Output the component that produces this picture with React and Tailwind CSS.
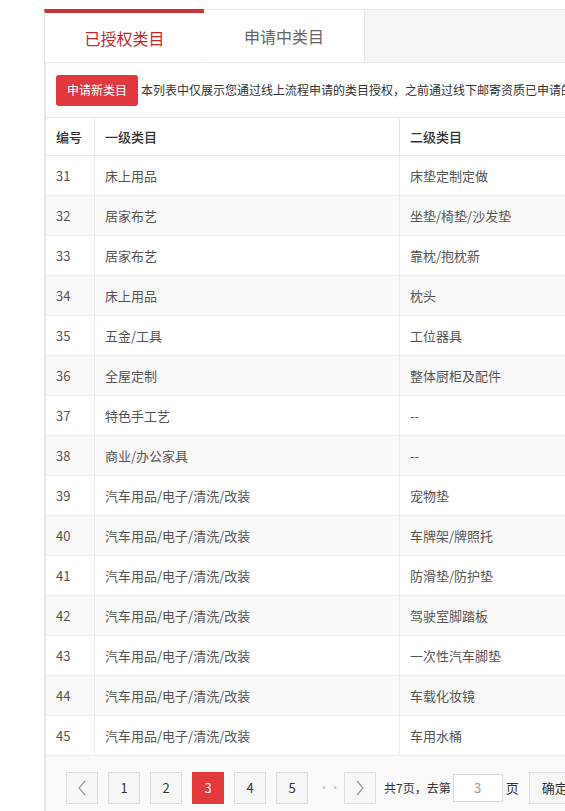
import React from "react";

const rows = [
  ["31", "床上用品", "床垫定制定做"],
  ["32", "居家布艺", "坐垫/椅垫/沙发垫"],
  ["33", "居家布艺", "靠枕/抱枕新"],
  ["34", "床上用品", "枕头"],
  ["35", "五金/工具", "工位器具"],
  ["36", "全屋定制", "整体厨柜及配件"],
  ["37", "特色手工艺", "--"],
  ["38", "商业/办公家具", "--"],
  ["39", "汽车用品/电子/清洗/改装", "宠物垫"],
  ["40", "汽车用品/电子/清洗/改装", "车牌架/牌照托"],
  ["41", "汽车用品/电子/清洗/改装", "防滑垫/防护垫"],
  ["42", "汽车用品/电子/清洗/改装", "驾驶室脚踏板"],
  ["43", "汽车用品/电子/清洗/改装", "一次性汽车脚垫"],
  ["44", "汽车用品/电子/清洗/改装", "车载化妆镜"],
  ["45", "汽车用品/电子/清洗/改装", "车用水桶"],
];

function Chevron({ dir }) {
  return (
    <svg width="10" height="16" viewBox="0 0 10 16" fill="none">
      {dir === "left" ? (
        <polyline points="8,1 2,8 8,15" stroke="#9a9a9a" strokeWidth="1.2" />
      ) : (
        <polyline points="2,1 8,8 2,15" stroke="#9a9a9a" strokeWidth="1.2" />
      )}
    </svg>
  );
}

function PageBtn({ children, active }) {
  return (
    <div
      className={
        active
          ? "w-[32px] h-[32px] flex items-center justify-center bg-[#e4393c] text-white text-[13px]"
          : "w-[32px] h-[32px] flex items-center justify-center bg-[#f7f7f7] border border-[#dcdcdc] text-[#333] text-[13px]"
      }
    >
      {children}
    </div>
  );
}

export default function App() {
  return (
    <div className="w-[565px] h-[811px] overflow-hidden bg-white font-['Noto_Sans_CJK_SC','Microsoft_YaHei',sans-serif]">
      <div className="ml-[44px] mt-[9px] w-[900px]">
        {/* Tabs */}
        <div className="flex h-[54px]">
          <div className="w-[160px] border-t-4 border-t-[#c9353a] border-l border-l-[#e6e6e6] border-b border-b-[#ececec] bg-white flex items-center justify-center text-[16px] text-[#c1272d]">
            已授权类目
          </div>
          <div className="w-[161px] border-t border-r border-b border-[#e6e6e6] bg-white flex items-center justify-center text-[16px] text-[#666]">
            申请中类目
          </div>
          <div className="flex-1 bg-[#f5f5f5] border-t border-b border-[#e6e6e6]"></div>
        </div>

        {/* Panel */}
        <div className="border-l-2 border-[#e6e6e6]">
          <div className="h-[54px] flex items-center pl-[10px]">
            <div className="w-[82px] h-[31px] rounded-[3px] bg-[#e0383e] text-white text-[12px] flex items-center justify-center shrink-0">
              申请新类目
            </div>
            <div className="ml-[3px] text-[12px] text-[#333] whitespace-nowrap">
              本列表中仅展示您通过线上流程申请的类目授权，之前通过线下邮寄资质已申请的类目授权请在其他页面查看
            </div>
          </div>

          {/* Table */}
          <div className="border-t border-[#e8e8e8]">
            <div className="flex h-[38px] text-[13px] text-[#333] font-medium border-b border-[#e8e8e8] bg-white">
              <div className="w-[49px] pl-[10px] flex items-center border-r border-[#e8e8e8]">编号</div>
              <div className="w-[305px] pl-[10px] flex items-center border-r border-[#e8e8e8]">一级类目</div>
              <div className="flex-1 pl-[10px] flex items-center">二级类目</div>
            </div>
            {rows.map((r, i) => (
              <div
                key={r[0]}
                className={
                  "flex h-[40px] text-[13px] text-[#555] border-b border-[#ececec] " +
                  (i % 2 === 1 ? "bg-[#f9f9f9]" : "bg-white")
                }
              >
                <div className="w-[49px] pl-[10px] flex items-center border-r border-[#ececec]">{r[0]}</div>
                <div className="w-[305px] pl-[10px] flex items-center border-r border-[#ececec]">{r[1]}</div>
                <div className="flex-1 pl-[10px] flex items-center">{r[2]}</div>
              </div>
            ))}
          </div>

          {/* Pagination */}
          <div className="bg-[#fafafa] h-[80px] pt-[16px] pl-[20px] flex items-start">
            <div className="flex items-center">
              <PageBtn>
                <Chevron dir="left" />
              </PageBtn>
              <div className="ml-[10px]"><PageBtn>1</PageBtn></div>
              <div className="ml-[10px]"><PageBtn>2</PageBtn></div>
              <div className="ml-[10px]"><PageBtn active>3</PageBtn></div>
              <div className="ml-[10px]"><PageBtn>4</PageBtn></div>
              <div className="ml-[10px]"><PageBtn>5</PageBtn></div>
              <div className="ml-[10px] w-[16px] text-center text-[12px] text-[#c8c8c8] tracking-[-1px]">····</div>
              <div className="ml-[10px]">
                <PageBtn>
                  <Chevron dir="right" />
                </PageBtn>
              </div>
              <div className="ml-[8px] text-[12px] text-[#333] whitespace-nowrap">共7页，去第</div>
              <div className="ml-[2px] w-[50px] h-[28px] bg-white border border-[#dcdcdc] flex items-center justify-center text-[13px] text-[#999]">
                3
              </div>
              <div className="ml-[3px] text-[13px] text-[#333]">页</div>
              <div className="ml-[10px] w-[52px] h-[32px] bg-[#f7f7f7] border border-[#dcdcdc] flex items-center justify-center text-[13px] text-[#333]">
                确定
              </div>
            </div>
          </div>
        </div>
      </div>
    </div>
  );
}
